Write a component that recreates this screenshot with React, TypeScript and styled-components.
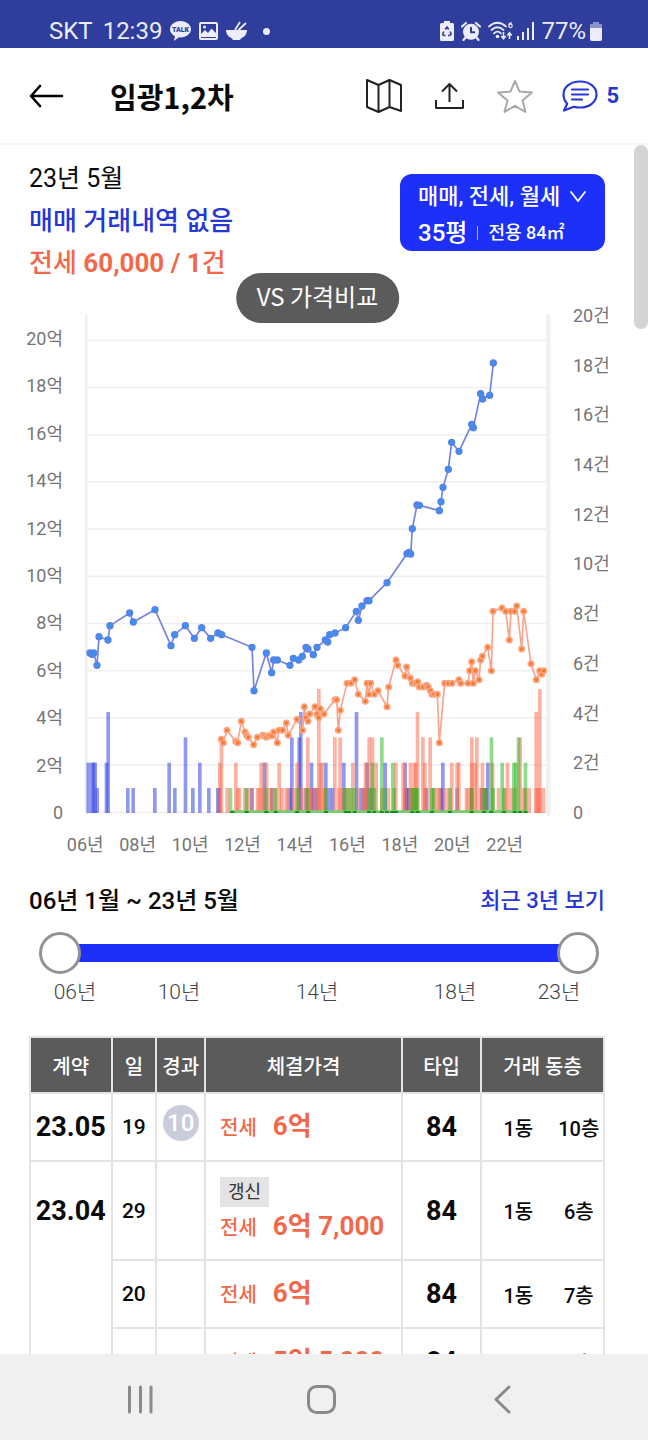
import React, { useState } from "react";
import styled, { createGlobalStyle, css } from "styled-components";

const roboto = `Roboto, "Noto Sans CJK KR", sans-serif`;
const noto = `"Noto Sans CJK KR", Roboto, sans-serif`;

const color = {
  status: "#2f3d9d",
  statusInk: "#ececfa",
  blue: "#1c30f9",
  blueInk: "#2637d6",
  orange: "#f2684a",
  grey: "#5b5b5b",
  line: "#e3e3e3",
};

const GlobalStyle = createGlobalStyle`
  *, *::before, *::after { box-sizing: border-box; }
  body { margin: 0; background: #fff; color: #0a0a0a; font-family: ${roboto}; }
  button { font: inherit; color: inherit; border: 0; padding: 0; background: none; cursor: pointer; }
  a { text-decoration: none; }
  svg { display: block; flex: none; }
`;

const Screen = styled.div`
  display: flex;
  flex-direction: column;
  height: 100vh;
  overflow: hidden;
`;

/* ---------- status bar ---------- */

const StatusBar = styled.div`
  display: flex;
  align-items: flex-end;
  justify-content: space-between;
  flex: none;
  height: 48px;
  padding: 0 46px 3px 49px;
  background: ${color.status};
  color: ${color.statusInk};
  font-size: 24px;
  line-height: 28px;
`;

const StatusGroup = styled.div<{ $gap: number }>`
  display: flex;
  align-items: center;
  gap: ${(p) => p.$gap}px;
`;

const Clock = styled.span`
  margin-left: 2px;
`;

const Dot = styled.span`
  width: 7px;
  height: 7px;
  margin-left: 8px;
  border-radius: 50%;
  background: currentColor;
`;

/* ---------- header ---------- */

const Header = styled.header`
  display: flex;
  align-items: center;
  flex: none;
  height: 97px;
  padding: 0 29px;
  border-bottom: 2px solid #f6f6f6;
`;

const Title = styled.h1`
  flex: 1;
  margin: 0 0 0 46px;
  font: 700 29px/40px ${noto};
`;

const Actions = styled.div`
  display: flex;
  align-items: center;
  gap: 29px;
`;

const IconButton = styled.button<{ $pad?: number }>`
  display: flex;
  align-items: center;
  gap: 8px;
  padding: 0 ${(p) => p.$pad ?? 0}px;
  color: ${color.blueInk};
  font-size: 22px;
  font-weight: 700;
`;

/* ---------- summary ---------- */

const Main = styled.main`
  position: relative;
  flex: 1;
  min-height: 0;
  overflow: hidden auto;
  scrollbar-width: none;
`;

const ScrollThumb = styled.div`
  position: absolute;
  top: 0;
  right: 0;
  width: 14px;
  height: 184px;
  border-radius: 7px;
  background: #d4d4d4;
`;

const Summary = styled.section`
  display: flex;
  justify-content: space-between;
  align-items: flex-start;
  padding: 13px 43px 0 29px;
`;

const SummaryLine = styled.p<{ $tone?: "blue" | "orange" }>`
  margin: 0;
  font-size: ${(p) => (p.$tone ? 26 : 25)}px;
  line-height: 42px;
  font-weight: ${(p) => (p.$tone === "orange" ? 700 : p.$tone ? 500 : 400)};
  color: ${(p) => (p.$tone === "blue" ? color.blueInk : p.$tone === "orange" ? color.orange : "#0a0a0a")};
`;

const Thin = styled.span`
  font-weight: 500;
`;

const FilterButton = styled.button`
  display: grid;
  align-content: center;
  min-width: 205px;
  height: 77px;
  margin-top: 16px;
  padding: 4px 18px 0;
  border-radius: 12px;
  background: ${color.blue};
  color: #fff;
  font-weight: 500;
  text-align: left;
`;

const FilterRow = styled.span<{ $size: number }>`
  display: flex;
  align-items: center;
  gap: 10px;
  font-size: ${(p) => p.$size}px;
  line-height: 36px;
  white-space: nowrap;
`;

const FilterDivider = styled.span`
  width: 1px;
  height: 14px;
  background: #aab4ff;
`;

const FilterArea = styled.span`
  font-size: 18px;
`;

/* ---------- chart ---------- */

const ChartSection = styled.section`
  position: relative;
  margin-top: 16px;
`;

const CompareButton = styled.button`
  position: absolute;
  top: -27px;
  left: 49%;
  transform: translateX(-50%);
  height: 50px;
  padding: 0 21px 4px;
  border-radius: 25px;
  background: ${color.grey};
  color: #fff;
  font: 400 24px/46px ${noto};
  white-space: nowrap;
`;

const Plot = styled.div`
  display: grid;
  grid-template-columns: 80px 1fr 96px;
`;

const Axis = styled.div<{ $side: "left" | "right" }>`
  display: flex;
  flex-direction: column;
  justify-content: space-between;
  color: #757575;
  font-size: 18px;
  line-height: 20px;
  ${(p) =>
    p.$side === "left"
      ? css`
          padding: 29px 17px 7px 0;
          text-align: right;
        `
      : css`
          padding: 6px 0 7px 21px;
        `}
`;

const Years = styled.div`
  display: flex;
  margin-top: 5px;
  padding: 0 117px 0 59px;
  color: #757575;
  font-size: 18px;
  line-height: 20px;
  text-align: center;

  span {
    flex: 1;
  }
`;

const ChartSvg = styled.svg`
  width: 100%;
  height: auto;
`;

/* ---------- period slider ---------- */

const PeriodHead = styled.div`
  display: flex;
  justify-content: space-between;
  margin-top: 30px;
  padding: 0 43px 0 29px;
  line-height: 32px;
`;

const PeriodTitle = styled.h2`
  margin: 0;
  font-size: 24px;
  font-weight: 500;
`;

const RecentLink = styled.a`
  color: ${color.blueInk};
  font-size: 22px;
  font-weight: 500;
`;

const Slider = styled.div`
  position: relative;
  display: flex;
  align-items: center;
  height: 42px;
  margin: 15px 49px 0 39px;
`;

const SliderTrack = styled.div`
  flex: 1;
  height: 18px;
  margin: 0 20px;
  background: ${color.blue};
`;

const thumb = css`
  width: 42px;
  height: 42px;
  border: 3px solid #929292;
  border-radius: 50%;
  background: #fff;
  pointer-events: auto;
`;

const SliderInput = styled.input`
  position: absolute;
  inset: 0;
  width: 100%;
  height: 42px;
  margin: 0;
  appearance: none;
  background: none;
  pointer-events: none;

  &::-webkit-slider-thumb {
    appearance: none;
    box-sizing: border-box;
    ${thumb}
  }
  &::-moz-range-thumb {
    box-sizing: border-box;
    ${thumb}
  }
`;

const SliderLabels = styled.div`
  display: grid;
  grid-template-columns: 46fr 162fr 114fr 162fr 46fr;
  margin-top: 6px;
  padding: 0 66px 0 52px;
  color: #444;
  font-size: 21px;
  font-weight: 300;
  line-height: 24px;
  text-align: center;
  white-space: nowrap;
`;

/* ---------- deals table ---------- */

const TableWrap = styled.section`
  margin-top: 32px;
  padding: 0 43px 24px 29px;
`;

const Table = styled.table`
  width: 100%;
  table-layout: fixed;
  border-collapse: collapse;
`;

const Col = styled.col<{ $w: number }>`
  width: ${(p) => p.$w}%;
`;

const Th = styled.th`
  height: 56px;
  padding: 0;
  border: 2px solid ${color.line};
  background: ${color.grey};
  color: #fff;
  font-size: 20px;
  font-weight: 500;
  white-space: nowrap;
`;

const Td = styled.td`
  height: 68px;
  padding: 0;
  border: 2px solid ${color.line};
  text-align: center;
  font-size: 21px;
  font-weight: 500;
  white-space: nowrap;
`;

const SizeTd = styled(Td)`
  font-size: 27px;
  font-weight: 700;
`;

/* A month spans its deals visually: only its first row has a line above it. */
const MonthTd = styled(SizeTd)<{ $first: boolean }>`
  border-bottom-width: 0;
  border-top-width: ${(p) => (p.$first ? 2 : 0)}px;
`;

const PriceTd = styled(Td)<{ $tall?: boolean }>`
  padding: ${(p) => (p.$tall ? "15px 0 12px 14px" : "0 0 0 14px")};
  text-align: left;
`;

const AgeBadge = styled.span`
  display: block;
  width: 36px;
  height: 36px;
  margin: 0 auto 8px;
  border-radius: 50%;
  background: #c9cddb;
  color: #fff;
  font: 500 24px/36px ${roboto};
`;

const Renewal = styled.span`
  display: block;
  width: fit-content;
  padding: 0 8px;
  background: #e4e4e4;
  color: #333;
  font-size: 18px;
  font-weight: 400;
  line-height: 30px;
`;

const Price = styled.span`
  display: flex;
  align-items: baseline;
  gap: 16px;
  color: ${color.orange};
  font-size: 26px;
  font-weight: 700;
  line-height: 38px;

  small {
    font-size: 20px;
    font-weight: 500;
  }
`;

const Place = styled.span`
  display: grid;
  grid-template-columns: 3fr 2fr;
  font-size: 20px;
`;

/* ---------- system navigation ---------- */

const NavBar = styled.nav`
  display: flex;
  justify-content: space-between;
  align-items: center;
  flex: none;
  height: 86px;
  padding: 4px 128px 0 124px;
  background: #f0f0f0;
`;

const NavButton = styled.button`
  display: flex;
`;

/* ---------- data ---------- */

// Price points, in plot units (71 units per 1억, zero at 757).
const saleLine =
  "60,279 66,283 71,279 81,316 87,230 114,240 120,197 179,159 190,186 255,149 303,257 314,224 346,197 373,235 395,203 422,235 444,219 455,224 546,262 552,392 589,279 605,338 611,300 622,300 660,316 670,295 686,300 697,289 708,262 714,267 730,284 741,262 766,240 773,246 779,224 795,219 827,203 859,154 865,181 876,138 891,122 897,122 951,68 1011,-19 1017,-23 1022,-18 1027,-94 1041,-165 1048,-164 1108,-148 1113,-175 1119,-218 1135,-272 1145,-353 1167,-326 1205,-407 1210,-397 1232,-499 1238,-483 1259,-494 1270,-591";

const leaseLine =
  "454,538 460,548 471,511 497,544 503,548 514,484 525,516 530,526 535,532 551,554 562,532 578,526 584,527 589,532 597,527 606,527 611,516 622,548 627,511 638,511 649,489 655,526 681,478 698,511 703,440 708,473 714,484 719,462 735,440 741,462 746,473 751,446 762,462 795,419 800,419 805,511 811,451 831,370 843,370 854,359 865,403 886,424 891,370 897,403 902,370 913,403 924,392 951,440 956,381 978,300 983,316 1005,348 1010,321 1021,354 1027,370 1037,370 1043,365 1048,381 1059,381 1070,376 1075,381 1081,392 1086,403 1092,403 1102,403 1108,548 1124,370 1135,370 1146,370 1167,359 1172,370 1194,370 1199,332 1205,305 1210,370 1216,332 1227,359 1232,300 1237,289 1253,262 1264,332 1269,154 1296,144 1307,154 1318,240 1323,154 1334,154 1340,138 1355,267 1361,154 1383,311 1399,359 1409,332 1415,343 1421,332";

const rentDots = [
  487, 530, 589, 617, 681, 714, 768, 827, 837, 854, 897, 913, 935, 951, 967, 978, 1027, 1043, 1086, 1140, 1205, 1242,
  1264, 1302, 1334, 1350, 1367,
];

// Number of deals per month: left edges of the bars, grouped by count.
type Bars = Record<number, number[]>;

const saleBars: Bars = {
  1: [76, 168, 184, 249, 309, 363, 411, 438, 443, 540, 600, 655, 703, 725, 735, 773, 783, 868, 878, 898, 1005, 1011, 1064, 1108, 1156, 1199, 1230, 1242],
  2: [49, 60, 65, 70, 104, 292, 384, 578, 719, 762, 816, 886, 940, 1000, 1113, 1248],
  3: [341, 660, 682],
  4: [109, 687, 854],
};

const leaseBars: Bars = {
  1: [466, 497, 503, 519, 529, 541, 557, 562, 573, 595, 600, 611, 630, 643, 649, 665, 681, 692, 703, 714, 720, 730, 741, 757, 762, 800, 811, 821, 832, 859, 875, 881, 930, 950, 1000, 1016, 1021, 1059, 1086, 1097, 1102, 1118, 1129, 1184, 1189, 1200, 1226, 1232, 1243, 1280, 1301, 1318, 1329, 1356, 1361, 1372, 1393, 1399, 1404, 1415],
  2: [444, 492, 568, 584, 622, 676, 746, 751, 843, 881, 913, 972, 994, 1016, 1027, 1032, 1059, 1140, 1156, 1161, 1200, 1210, 1232, 1262, 1307],
  3: [449, 708, 789, 805, 892, 902, 1053, 1075, 1200, 1215, 1345],
  4: [1037, 1393],
  5: [741, 1404],
};

const rentBars: Bars = {
  1: [476, 524, 584, 611, 676, 708, 762, 818, 827, 838, 848, 892, 908, 940, 967, 1021, 1027, 1033, 1037, 1080, 1086, 1135, 1199, 1237, 1243, 1264, 1296],
  2: [902, 963, 1291, 1326, 1332, 1361],
  3: [930, 1259, 1340],
};

const barTop = [757, 684, 608, 532, 456, 387];

const series: { bars: Bars; fill: string }[] = [
  { bars: saleBars, fill: "rgba(45,62,222,.53)" },
  { bars: leaseBars, fill: "rgba(252,108,78,.52)" },
  { bars: rentBars, fill: "rgba(40,180,30,.5)" },
];

const points = (line: string) => line.split(" ").map((p) => p.split(",").map(Number));

const priceTicks = ["20억", "18억", "16억", "14억", "12억", "10억", "8억", "6억", "4억", "2억", "0"];
const countTicks = ["20건", "18건", "16건", "14건", "12건", "10건", "8건", "6건", "4건", "2건", "0"];
const yearTicks = ["06년", "08년", "10년", "12년", "14년", "16년", "18년", "20년", "22년"];

interface Deal {
  month?: string;
  day: string;
  age?: string;
  renewed?: boolean;
  price: string;
  floor: string;
}

const deals: Deal[] = [
  { month: "23.05", day: "19", age: "10", price: "6억", floor: "10층" },
  { month: "23.04", day: "29", renewed: true, price: "6억 7,000", floor: "6층" },
  { day: "20", price: "6억", floor: "7층" },
  { day: "17", price: "5억 5,000", floor: "7층" },
];

/* ---------- pieces ---------- */

function PriceChart() {
  return (
    <ChartSvg viewBox="30 -780 1416 1590" role="img" aria-label="실거래가 그래프">
      <g stroke="#f0f0f0" strokeWidth="5">
        {priceTicks.map((t, i) => (
          <path key={t} d={`M49 ${-659 + i * 141.6}H1430`} />
        ))}
      </g>
      <path d="M49 -732V762" stroke="#f0f0f0" strokeWidth="8" strokeLinecap="round" />
      <path d="M1435 -732V762" stroke="#f0f0f0" strokeWidth="13" strokeLinecap="round" />
      {series.map(({ bars, fill }) => (
        <g key={fill} fill={fill}>
          {Object.entries(bars).map(([n, xs]) =>
            xs.map((x: number) => (
              <rect key={`${n}-${x}`} x={x} y={barTop[Number(n)]} width="11" height={759 - barTop[Number(n)]} />
            )),
          )}
        </g>
      ))}
      <path d="M482 755H1372" stroke="#78cc6c" strokeWidth="8" />
      {rentDots.map((x) => (
        <path key={x} d={`M${x - 7} 759a7 7 0 0 1 14 0z`} fill="#168c1c" />
      ))}
      <polyline points={leaseLine} fill="none" stroke="#f8a48f" strokeWidth="5" />
      {points(leaseLine).map(([x, y], i) => (
        <circle key={i} cx={x} cy={y} r="8" fill="#f57a2a" stroke="#fba585" strokeWidth="5" />
      ))}
      <polyline points={saleLine} fill="none" stroke="#7682dc" strokeWidth="5" />
      {points(saleLine).map(([x, y], i) => (
        <circle key={i} cx={x} cy={y} r="9" fill="#3c90ee" stroke="#5a80e8" strokeWidth="4" />
      ))}
    </ChartSvg>
  );
}

function StatusIcons() {
  return (
    <>
      <svg width="21" height="22" viewBox="0 0 21 22" fill="currentColor">
        <path d="M10.500 1C4.700 1 0 4.700 0 9.200c0 3 2 5.600 5 7.100L3.800 21l5.300-3.700 1.400.1C16.300 17.400 21 13.700 21 9.200S16.300 1 10.500 1z" />
        <text x="10.500" y="12" fontSize="7" fontWeight="900" textAnchor="middle" fill={color.status}>
          TALK
        </text>
      </svg>
      <svg width="19" height="18" viewBox="0 0 19 18">
        <rect x="1" y="1" width="17" height="16" rx="1" fill="none" stroke="currentColor" strokeWidth="2" />
        <path d="M2 15v-3l4-4 3 3 3.500-4.500L17 11v4z" fill="currentColor" />
        <circle cx="5.500" cy="5" r="1.500" fill="currentColor" />
      </svg>
      <svg width="21" height="20" viewBox="0 0 21 20" fill="currentColor">
        <path d="M0 9h21c0 4-2.500 7-6 8.500L14 19H7l-1-1.500C2.500 16 0 13 0 9z" />
        <path d="M9 9l5-8M12.500 9L20 2" stroke="currentColor" strokeWidth="1.800" />
      </svg>
    </>
  );
}

function SystemIcons() {
  return (
    <>
      <svg width="14" height="20" viewBox="0 0 14 20">
        <path d="M4 0h6v2h2.500q1.500 0 1.500 1.500v15q0 1.500-1.500 1.500h-11Q0 20 0 18.500v-15Q0 2 1.500 2H4z" fill="currentColor" />
        <path d="M5.200 8.500L7 6l1.800 2.500M10 10.500l1.200 2.500-1.700 1.500H8M5.500 14.500h-2L2.700 13 4 10.500" fill="none" stroke={color.status} strokeWidth="1.600" />
      </svg>
      <svg width="20" height="20" viewBox="0 0 20 20">
        <path d="M1 5.500L5 2M19 5.500L15 2M4.500 16.500L2.500 19M15.500 16.500l2 2.500" stroke="currentColor" strokeWidth="2.200" strokeLinecap="round" />
        <circle cx="10" cy="10.800" r="8" fill="currentColor" />
        <path d="M10 6v5.300h4" fill="none" stroke={color.status} strokeWidth="2" />
      </svg>
      <StatusGroup $gap={3}>
        <svg width="26" height="20" viewBox="0 0 26 20" fill="none" stroke="currentColor" strokeWidth="1.800">
          <path d="M1 5.500Q9.500-2 18 5.500M3.500 9Q9.500 3.500 15.500 9M6 12.300Q9.500 9 13 12.300" strokeLinecap="round" />
          <circle cx="9.500" cy="15.500" r="1.800" fill="currentColor" stroke="none" />
          <path d="M15.500 11v6M13.300 15l2.200 2.700 2.200-2.700M21.500 18v-6M19.300 14.500l2.200-2.800 2.200 2.800" strokeWidth="1.500" />
          <path d="M23.800 1.800q-3-.2-3 3.200a1.700 1.700 0 1 0 1.700-1.800q-1.200 0-1.700 1.200" strokeWidth="1.200" />
        </svg>
        <svg width="17" height="18" viewBox="0 0 17 18" fill="none" stroke="currentColor" strokeWidth="2">
          <path d="M1 18v-4M6 18v-8M11 18V6M16 18V0" />
        </svg>
      </StatusGroup>
    </>
  );
}

function PeriodSlider() {
  const [from, setFrom] = useState(0);
  const [to, setTo] = useState(208);
  return (
    <Slider>
      <SliderTrack />
      <SliderInput type="range" aria-label="시작 시점" min={0} max={208} value={from} onChange={(e) => setFrom(Math.min(+e.target.value, to))} />
      <SliderInput type="range" aria-label="종료 시점" min={0} max={208} value={to} onChange={(e) => setTo(Math.max(+e.target.value, from))} />
    </Slider>
  );
}

function DealRow({ deal }: { deal: Deal }) {
  return (
    <tr>
      <MonthTd $first={Boolean(deal.month)}>{deal.month}</MonthTd>
      <Td>{deal.day}</Td>
      <Td>{deal.age && <AgeBadge>{deal.age}</AgeBadge>}</Td>
      <PriceTd $tall={deal.renewed}>
        {deal.renewed && <Renewal>갱신</Renewal>}
        <Price>
          <small>전세</small>
          {deal.price}
        </Price>
      </PriceTd>
      <SizeTd>84</SizeTd>
      <Td>
        <Place>
          <span>1동</span>
          <span>{deal.floor}</span>
        </Place>
      </Td>
    </tr>
  );
}

export default function App() {
  return (
    <Screen>
      <GlobalStyle />
      <StatusBar>
        <StatusGroup $gap={8}>
          <span>SKT</span>
          <Clock>12:39</Clock>
          <StatusIcons />
          <Dot />
        </StatusGroup>
        <StatusGroup $gap={7}>
          <SystemIcons />
          <StatusGroup $gap={4}>
            <span>77%</span>
            <svg width="12" height="19" viewBox="0 0 12 19">
              <path d="M3 0h6v2h3v5H0V2h3z" fill="#8b92cc" />
              <path d="M0 6h12v11q0 2-2 2H2q-2 0-2-2z" fill="currentColor" />
            </svg>
          </StatusGroup>
        </StatusGroup>
      </StatusBar>

      <Header>
        <IconButton aria-label="뒤로">
          <svg width="35" height="26" viewBox="0 0 35 26" fill="none" stroke="#000" strokeWidth="2.600" strokeLinecap="round" strokeLinejoin="round">
            <path d="M33 13H2M11 3L2 13l9 10" />
          </svg>
        </IconButton>
        <Title>임광1,2차</Title>
        <Actions>
          <IconButton aria-label="지도">
            <svg width="36" height="34" viewBox="0 0 36 34" fill="none" stroke="#222" strokeWidth="2" strokeLinejoin="round">
              <path d="M1 1l11.500 5L23.500 1 35 6v26l-11.500-4-11 5L1 28zM12.500 6v27M23.500 1v27" />
            </svg>
          </IconButton>
          <IconButton aria-label="공유" $pad={4}>
            <svg width="29" height="27" viewBox="0 0 29 27" fill="none" stroke="#222" strokeWidth="2" strokeLinejoin="round">
              <path d="M1 18v8h27v-8M14.500 20V2M7 9.500L14.500 2 22 9.500" />
            </svg>
          </IconButton>
          <IconButton aria-label="관심">
            <svg width="36" height="34" viewBox="0 0 36 34" fill="none" stroke="#a8a8a8" strokeWidth="2" strokeLinejoin="round">
              <path d="M18 2l4.600 10.600L35 13.500l-9.500 8L28.500 33 18 26.800 7.500 33l3-11.500L1 13.500l12.400-.9z" />
            </svg>
          </IconButton>
          <IconButton aria-label="댓글 5개">
            <svg width="36" height="32" viewBox="0 0 36 32" fill="none" stroke="currentColor" strokeWidth="2.200" strokeLinecap="round" strokeLinejoin="round">
              <path d="M18 1.500c9.400 0 16.500 5.600 16.500 13S27.400 27.500 18 27.500c-2.200 0-4.300-.2-6.200-.8L2 30.500l3.200-6.800C2.700 21.200 1.500 18 1.500 14.500c0-7.400 7.100-13 16.500-13zM10 9.500h16M10 14.500h16M10 19.500h10" />
            </svg>
            5
          </IconButton>
        </Actions>
      </Header>

      <Main>
        <ScrollThumb />
        <Summary>
          <div>
            <SummaryLine>23년 5월</SummaryLine>
            <SummaryLine $tone="blue">매매 거래내역 없음</SummaryLine>
            <SummaryLine $tone="orange">
              <Thin>전세</Thin> 60,000 / 1<Thin>건</Thin>
            </SummaryLine>
          </div>
          <FilterButton>
            <FilterRow $size={22}>
              매매, 전세, 월세
              <svg width="16" height="11" viewBox="0 0 16 11" fill="none" stroke="currentColor" strokeWidth="1.800" strokeLinecap="round">
                <path d="M1 1l7 9 7-9" />
              </svg>
            </FilterRow>
            <FilterRow $size={24}>
              35평
              <FilterDivider />
              <FilterArea>전용 84㎡</FilterArea>
            </FilterRow>
          </FilterButton>
        </Summary>

        <ChartSection>
          <Plot>
            <Axis $side="left">
              {priceTicks.map((t) => (
                <span key={t}>{t}</span>
              ))}
            </Axis>
            <PriceChart />
            <Axis $side="right">
              {countTicks.map((t) => (
                <span key={t}>{t}</span>
              ))}
            </Axis>
          </Plot>
          <CompareButton>VS 가격비교</CompareButton>
          <Years>
            {yearTicks.map((t) => (
              <span key={t}>{t}</span>
            ))}
          </Years>
        </ChartSection>

        <PeriodHead>
          <PeriodTitle>06년 1월 ~ 23년 5월</PeriodTitle>
          <RecentLink href="#recent">최근 3년 보기</RecentLink>
        </PeriodHead>
        <PeriodSlider />
        <SliderLabels>
          <span>06년</span>
          <span>10년</span>
          <span>14년</span>
          <span>18년</span>
          <span>23년</span>
        </SliderLabels>

        <TableWrap>
          <Table>
            <colgroup>
              {[14.2, 7.8, 8.5, 34.3, 13.8, 21.4].map((w) => (
                <Col key={w} $w={w} />
              ))}
            </colgroup>
            <thead>
              <tr>
                {["계약", "일", "경과", "체결가격", "타입", "거래 동층"].map((h) => (
                  <Th key={h} scope="col">
                    {h}
                  </Th>
                ))}
              </tr>
            </thead>
            <tbody>
              {deals.map((deal) => (
                <DealRow key={deal.day} deal={deal} />
              ))}
            </tbody>
          </Table>
        </TableWrap>
      </Main>

      <NavBar>
        <NavButton aria-label="최근 앱">
          <svg width="32" height="32" viewBox="0 0 32 32" stroke="#8a8a8a" strokeWidth="3" strokeLinecap="round">
            <path d="M5.500 4v25M16.500 4v25M27 4v25" />
          </svg>
        </NavButton>
        <NavButton aria-label="홈">
          <svg width="32" height="32" viewBox="0 0 32 32" fill="none" stroke="#8a8a8a" strokeWidth="3">
            <rect x="2.500" y="3.500" width="26" height="26" rx="8" />
          </svg>
        </NavButton>
        <NavButton aria-label="이전">
          <svg width="32" height="32" viewBox="0 0 32 32" fill="none" stroke="#8a8a8a" strokeWidth="3" strokeLinecap="round" strokeLinejoin="round">
            <path d="M21 4L8 16.500 21 29" />
          </svg>
        </NavButton>
      </NavBar>
    </Screen>
  );
}
